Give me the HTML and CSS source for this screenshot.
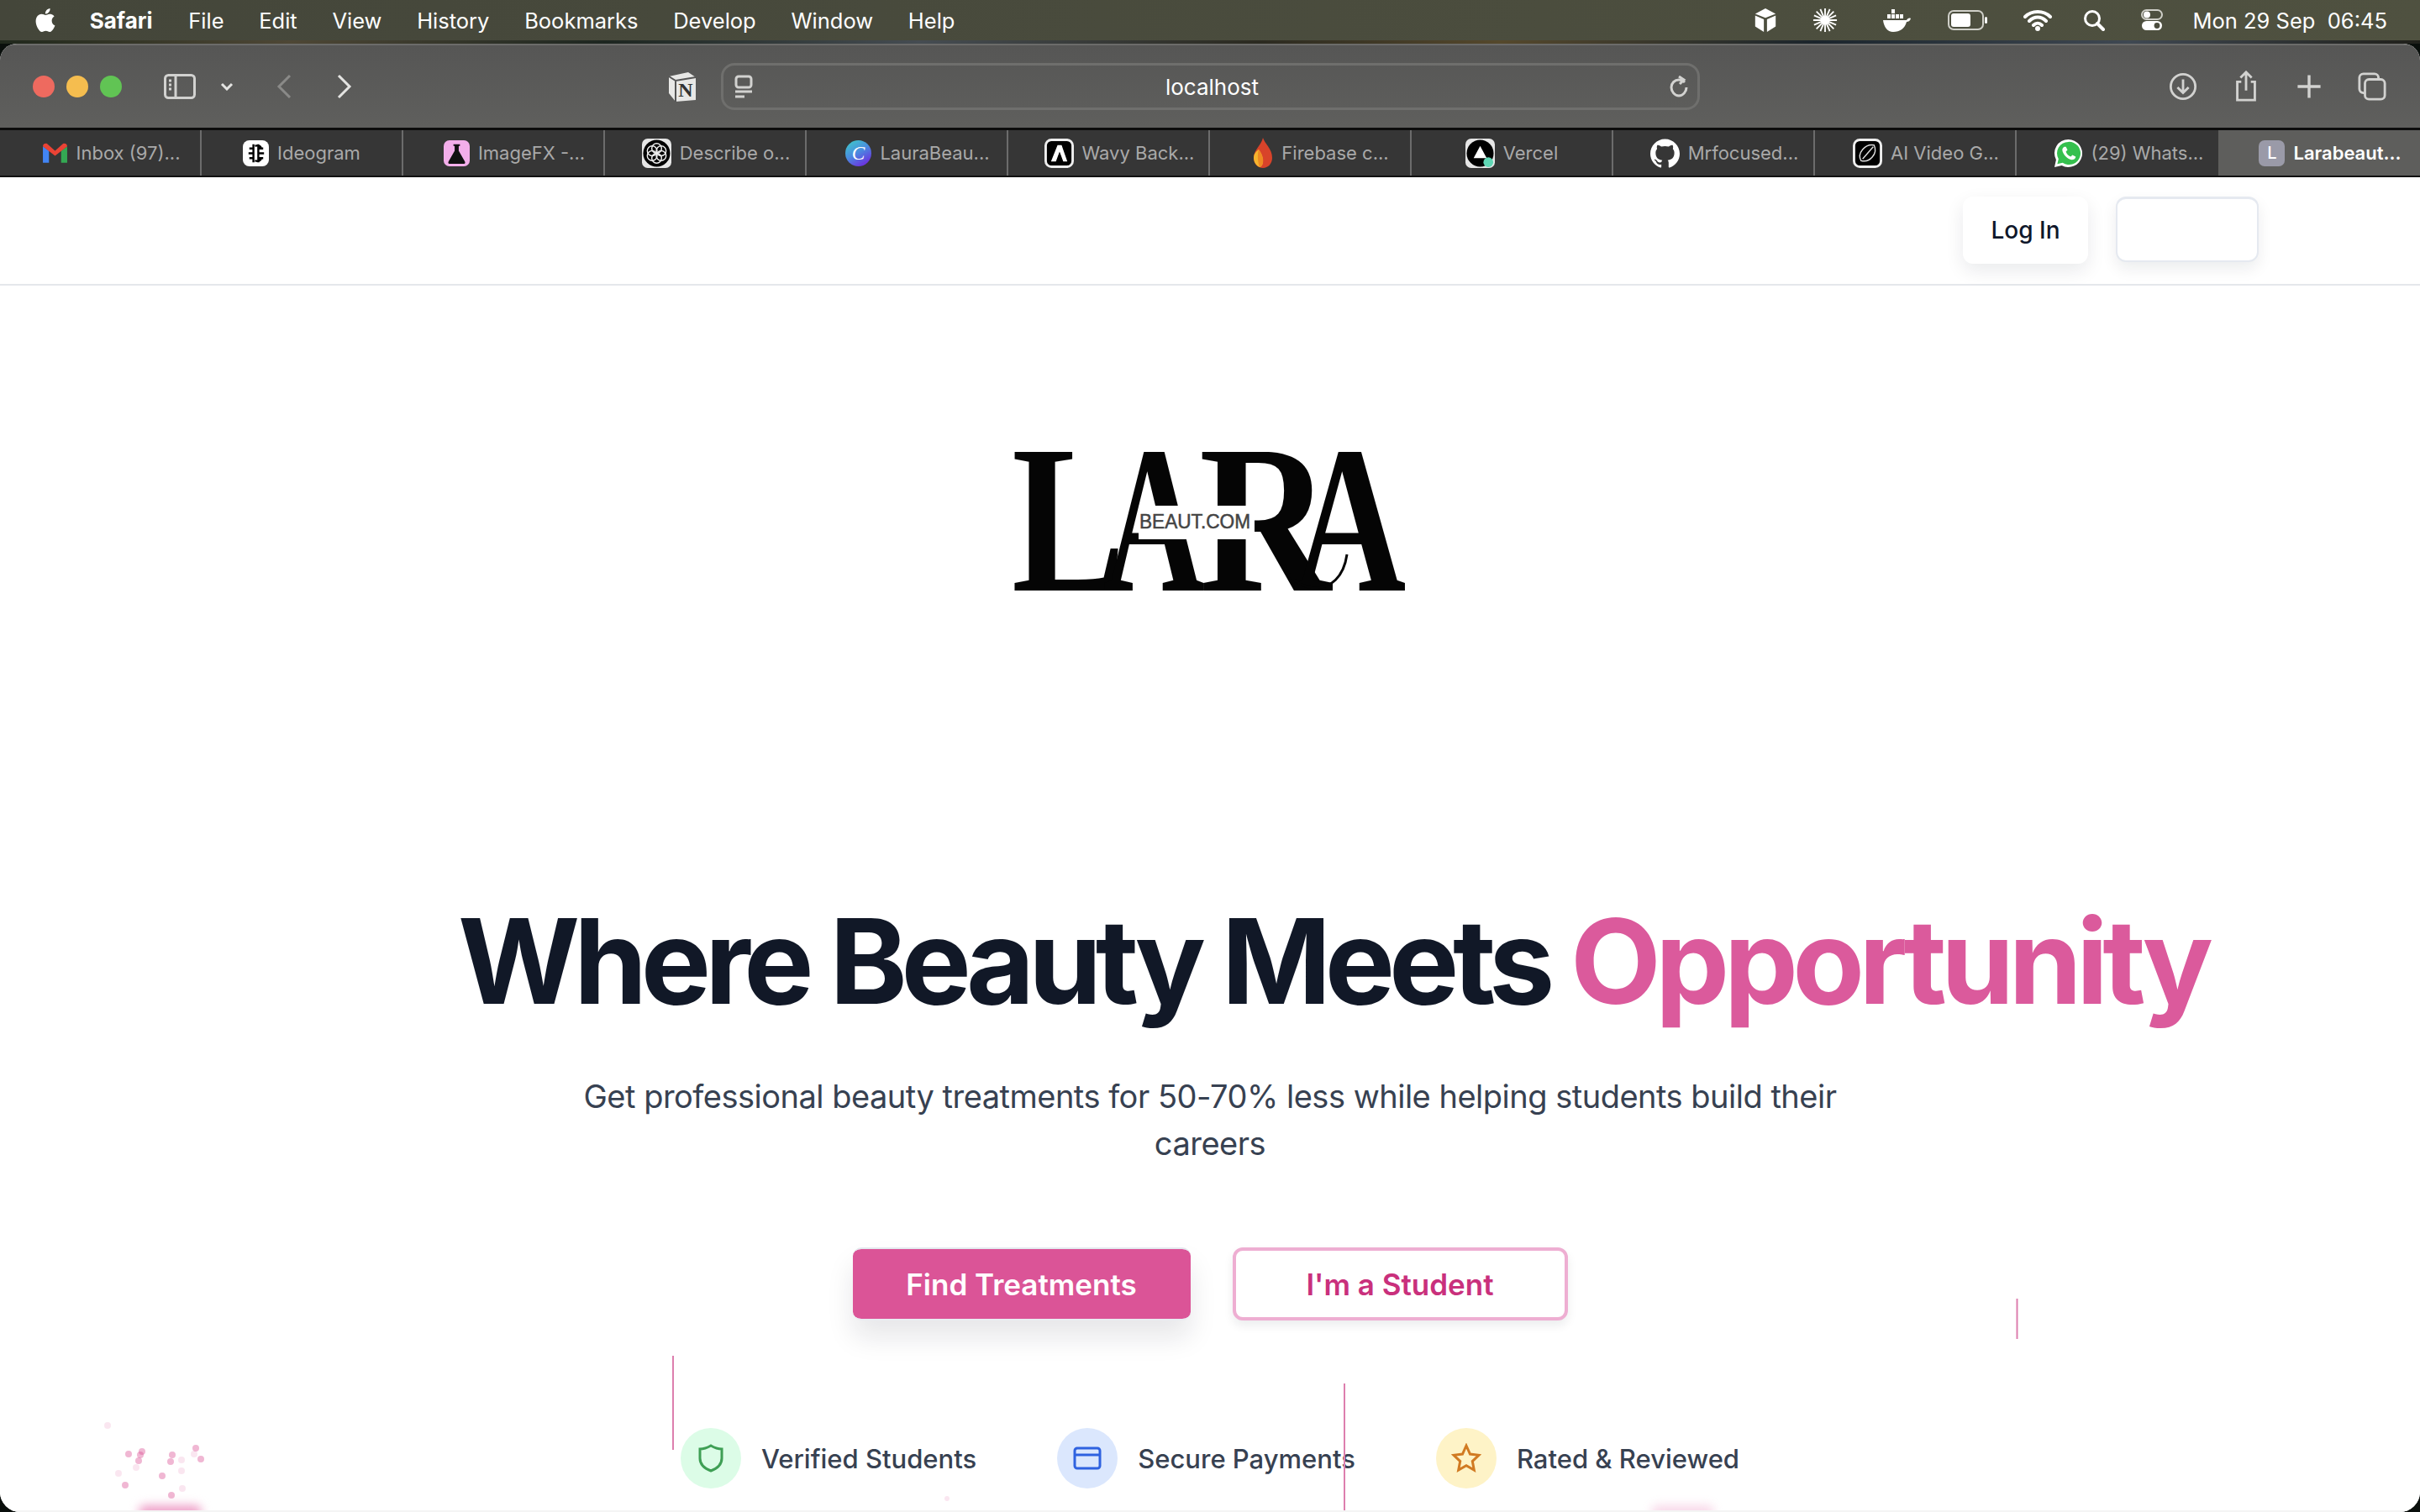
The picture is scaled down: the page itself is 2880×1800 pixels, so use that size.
FILE: index.html
```html
<!DOCTYPE html>
<html lang="en">
<head>
<meta charset="utf-8">
<title>Larabeaut</title>
<link rel="stylesheet" href="styles.css">
</head>
<body>
<div class="screen">
  <header class="menubar">
    <nav class="menu-left">
      <svg class="apple" viewBox="0 0 24 24"><path d="M12.152 6.896c-.948 0-2.415-1.078-3.96-1.04-2.04.027-3.91 1.183-4.961 3.014-2.117 3.675-.546 9.103 1.519 12.09 1.013 1.454 2.208 3.09 3.792 3.039 1.52-.065 2.09-.987 3.935-.987 1.831 0 2.35.987 3.96.948 1.637-.026 2.676-1.48 3.676-2.948 1.156-1.688 1.636-3.325 1.662-3.415-.039-.013-3.182-1.221-3.22-4.857-.026-3.04 2.48-4.494 2.597-4.559-1.429-2.09-3.623-2.324-4.39-2.376-2-.156-3.675 1.09-4.61 1.09zM15.53 3.83c.843-1.012 1.4-2.427 1.245-3.83-1.207.052-2.662.805-3.532 1.818-.78.896-1.454 2.338-1.273 3.714 1.338.104 2.715-.688 3.559-1.701"/></svg>
      <span class="menu-app">Safari</span>
      <span>File</span><span>Edit</span><span>View</span><span>History</span><span>Bookmarks</span><span>Develop</span><span>Window</span><span>Help</span>
    </nav>
    <div class="menu-right">
      <svg class="st st-box" viewBox="0 0 30 32"><path class="w" d="M15 1 28 8 15 13 2 8z"/><path class="w" d="M2 10 13 15V31L2 24z"/><path class="w" d="M28 10 17 15V31L28 24z"/></svg>
      <svg class="st st-star" viewBox="0 0 32 32"><g class="wl"><path d="M16 1V31M1 16H31M5 5 27 27M27 5 5 27M10 2 22 30M22 2 10 30M2 10 30 22M30 10 2 22"/></g></svg>
      <svg class="st st-whale" viewBox="0 0 36 30"><path class="w" d="M2 15H30C31 13 33 12 35 13 34 16 32 17 30 17 28 25 22 29 14 29 7 29 3 23 2 15z"/><path class="w" d="M7 8H11V13H7zM12 8H16V13H12zM17 8H21V13H17zM12 2H16V7H12zM22 8H26V13H22z"/></svg>
      <svg class="st st-batt" viewBox="0 0 48 24"><rect class="ol" x="1" y="1" width="41" height="22" rx="6"/><rect class="w" x="4" y="4" width="23" height="16" rx="3"/><rect class="w" x="44" y="8" width="3" height="8" rx="1.5"/></svg>
      <svg class="st st-wifi" viewBox="0 0 34 26"><path class="wa" d="M2 9C10 1 24 1 32 9M7 14C13 8 21 8 27 14M12 19C15 16 19 16 22 19"/><circle class="w" cx="17" cy="23" r="3"/></svg>
      <svg class="st st-search" viewBox="0 0 26 26"><circle class="ol2" cx="11" cy="11" r="8.5"/><path class="wa" d="M17 17 24 24"/></svg>
      <svg class="st st-ctrl" viewBox="0 0 28 28"><rect class="ol" x="2" y="2" width="24" height="11" rx="5.5"/><circle class="w" cx="8" cy="7.5" r="4"/><rect class="w" x="2" y="15" width="24" height="11" rx="5.5"/><circle class="dk" cx="20" cy="20.5" r="3.4"/></svg>
      <span class="clock">Mon 29 Sep&nbsp; 06:45</span>
    </div>
  </header>
  <div class="wallpaper"></div>
  <div class="window">
    <div class="toolbar">
      <div class="lights"><i class="red"></i><i class="amber"></i><i class="green"></i></div>
      <svg class="tb tb-side" viewBox="0 0 38 30"><rect class="tl" x="1.5" y="1.5" width="35" height="27" rx="4"/><path class="tl" d="M14 2V28"/><path class="tl" d="M6 8H9M6 13H9M6 18H9"/></svg>
      <svg class="tb tb-chev" viewBox="0 0 16 10"><path class="tl3" d="M2 2 8 8 14 2"/></svg>
      <svg class="tb tb-back" viewBox="0 0 18 30"><path class="tl dim" d="M16 2 3 15 16 28"/></svg>
      <svg class="tb tb-fwd" viewBox="0 0 18 30"><path class="tl3" d="M2 2 15 15 2 28"/></svg>
      <svg class="tb tb-notion" viewBox="0 0 38 38"><path class="nb" d="M3 7 26 2 35 8V35L11 37 3 27z"/><path class="nl" d="M3 7 11 12 35 8M11 12V37"/><text class="nt" x="23" y="31">N</text></svg>
      <div class="address">
        <svg class="tb tb-reader" viewBox="0 0 24 28"><rect class="tl" x="3" y="2" width="18" height="13" rx="3"/><path class="tl" d="M2 20H22M2 26H13"/></svg>
        <span class="url">localhost</span>
        <svg class="tb tb-reload" viewBox="0 0 24 26"><path class="tl" d="M19 8C17 6 15 5 12 5 7 5 3 9 3 14S7 24 12 24 21 19 21 14"/><path class="tl" d="M12 1 18 5 13 10"/></svg>
      </div>
      <div class="tb-right">
        <svg class="tb tb-r" viewBox="0 0 36 36"><circle class="tl" cx="18" cy="18" r="15.5"/><path class="tl" d="M18 9V26M11 19 18 26 25 19"/></svg>
        <svg class="tb tb-r" viewBox="0 0 30 40"><path class="tl" d="M9 14H4V37H26V14H21M15 25V2M8 9 15 2 22 9"/></svg>
        <svg class="tb tb-r" viewBox="0 0 30 30"><path class="tl" d="M15 3V27M3 15H27"/></svg>
        <svg class="tb tb-r" viewBox="0 0 36 36"><rect class="tl" x="2" y="2" width="24" height="24" rx="5"/><rect class="tl fillbg" x="9" y="9" width="25" height="25" rx="5"/></svg>
      </div>
    </div>
    <div class="tabs">
      <div class="tab ell">
        <svg class="fav" viewBox="0 0 30 24"><path fill="#4285f4" d="M1 23V4L8 9V23z"/><path fill="#34a853" d="M29 23V4L22 9V23z"/><path fill="#ea4335" d="M1 4C1 1 4 0 6 1L15 9 24 1C26 0 29 1 29 4L15 15z"/></svg>
        <span>Inbox (97)...</span>
      </div>
      <div class="tab">
        <svg class="fav" viewBox="0 0 32 32"><rect fill="#fff" width="32" height="32" rx="8"/><path class="brain" d="M13 5V27M19 5V27M8 10H14M7 16H13M8 22H14M18 10H25M19 16H26M18 22H25M15 7C20 5 23 8 22 11M15 25C20 27 23 24 22 21"/></svg>
        <span>Ideogram</span>
      </div>
      <div class="tab ell">
        <svg class="fav" viewBox="0 0 32 32"><rect fill="#f3aeea" width="32" height="32" rx="7"/><path fill="#111" d="M12 5H20V7H18.500V13L26 26C27 28 26 29 24 29H8C6 29 5 28 6 26L13.500 13V7H12z"/></svg>
        <span>ImageFX -...</span>
      </div>
      <div class="tab ell">
        <svg class="fav big" viewBox="0 0 36 36"><rect fill="#e6e6e6" width="36" height="36" rx="7"/><circle cx="18" cy="18" r="16.500" fill="#000"/><g class="gpt"><circle cx="18" cy="12" r="6"/><circle cx="23.500" cy="15" r="6"/><circle cx="23.500" cy="21" r="6"/><circle cx="18" cy="24" r="6"/><circle cx="12.500" cy="21" r="6"/><circle cx="12.500" cy="15" r="6"/></g></svg>
        <span>Describe o...</span>
      </div>
      <div class="tab ell">
        <svg class="fav" viewBox="0 0 32 32"><defs><linearGradient id="cv" x1="0" y1="0" x2="0.6" y2="1"><stop offset="0" stop-color="#3dd1c6"/><stop offset=".55" stop-color="#4a8be0"/><stop offset="1" stop-color="#6a35e0"/></linearGradient></defs><circle cx="16" cy="16" r="16" fill="url(#cv)"/><text class="cv" x="16" y="24">C</text></svg>
        <span>LauraBeau...</span>
      </div>
      <div class="tab ell">
        <svg class="fav big" viewBox="0 0 36 36"><rect fill="#000" stroke="#eee" stroke-width="3" x="1.500" y="1.500" width="33" height="33" rx="7"/><path fill="#fff" d="M8 28 16 8H21L28 28H23L18.500 16 14 28z"/></svg>
        <span>Wavy Back...</span>
      </div>
      <div class="tab ell">
        <svg class="fav flame" viewBox="0 0 24 36"><path fill="#d8432a" d="M12 0C14 7 23 13 23 24 23 31 18 36 12 36 6 36 1 31 1 24 1 14 10 9 12 0z"/><path fill="#f6b52e" d="M1 24C1 19 4 16 7 14 11 19 12 25 12 28 12 32 10 35 8 35 4 33 1 29 1 24z"/><path fill="#ee8a23" d="M7 14C11 19 13 25 12 30 11 33 10 34 8 35 6 30 5 20 7 14z"/></svg>
        <span>Firebase c...</span>
      </div>
      <div class="tab">
        <svg class="fav big" viewBox="0 0 36 36"><rect fill="#e6e6e6" width="36" height="36" rx="7"/><circle cx="18" cy="18" r="16.500" fill="#000"/><path fill="#fff" d="M18 9 26 24H10z"/><circle cx="28" cy="29" r="6" fill="#5fd6b4"/></svg>
        <span>Vercel</span>
      </div>
      <div class="tab ell">
        <svg class="fav big" viewBox="0 0 24 24"><path fill="#fff" d="M12 .297c-6.630 0-12 5.373-12 12 0 5.303 3.438 9.800 8.205 11.385.6.113.82-.258.82-.577 0-.285-.01-1.040-.015-2.040-3.338.724-4.042-1.610-4.042-1.610C4.422 18.070 3.633 17.700 3.633 17.700c-1.087-.744.084-.729.084-.729 1.205.084 1.838 1.236 1.838 1.236 1.070 1.835 2.809 1.305 3.495.998.108-.776.417-1.305.76-1.605-2.665-.3-5.466-1.332-5.466-5.930 0-1.310.465-2.380 1.235-3.220-.135-.303-.54-1.523.105-3.176 0 0 1.005-.322 3.300 1.230.96-.267 1.980-.399 3-.405 1.020.006 2.040.138 3 .405 2.280-1.552 3.285-1.230 3.285-1.230.645 1.653.24 2.873.12 3.176.765.84 1.230 1.910 1.230 3.220 0 4.610-2.805 5.625-5.475 5.920.42.36.81 1.096.81 2.220 0 1.606-.015 2.896-.015 3.286 0 .315.21.69.825.57C20.565 22.092 24 17.592 24 12.297c0-6.627-5.373-12-12-12"/></svg>
        <span>Mrfocused...</span>
      </div>
      <div class="tab ell">
        <svg class="fav big" viewBox="0 0 36 36"><rect fill="#000" stroke="#eee" stroke-width="3" x="1.500" y="1.500" width="33" height="33" rx="7"/><path class="swirl" d="M10 27C5 18 15 6 26 8 31 18 21 30 10 27zM12 25 25 10"/></svg>
        <span>AI Video G...</span>
      </div>
      <div class="tab ell">
        <svg class="fav big" viewBox="0 0 36 36"><path fill="#fff" d="M18 1A17 17 0 0 0 3 26L1 35 10 33A17 17 0 1 0 18 1z"/><path fill="#35c04e" d="M18 4A14 14 0 0 0 6 25L4.500 31 11 29.500A14 14 0 1 0 18 4z"/><path fill="#fff" d="M13 10C11 11 10 13 11 16 13 21 17 25 22 26 25 26 27 24 27 22L23 20 21 22C18 21 16 19 15 16L17 14 15 10z"/></svg>
        <span>(29) Whats...</span>
      </div>
      <div class="tab ell active">
        <span class="fav-l">L</span>
        <span>Larabeaut...</span>
      </div>
    </div>
    <main class="page">
      <div class="navbar">
        <button class="login">Log In</button>
        <button class="blank" aria-label="Sign up"></button>
      </div>
      <section class="hero">
        <svg class="logo" viewBox="0 0 466 167" role="img" aria-label="Lara Beaut.com">
          <text class="ll" transform="translate(-3 165) scale(.8 1)">L</text>
          <text class="ll" transform="translate(106 165) scale(.66 1)">A</text>
          <text class="ll" transform="translate(220 165) scale(.86 1)">R</text>
          <text class="ll" transform="translate(332 165) scale(.735 1)">A</text>
          <rect class="cut" x="148" y="64" width="138" height="40"/>
          <path class="swash" d="M322 135C332 168 388 178 396 122"/>
          <text class="lb" x="149" y="91" textLength="132" lengthAdjust="spacingAndGlyphs">BEAUT.COM</text>
        </svg>
        <h1 class="headline">Where Beauty Meets <em>Opportunity</em></h1>
        <p class="lead">Get professional beauty treatments for 50-70% less while helping students build their careers</p>
        <div class="cta">
          <button class="btn-primary">Find Treatments</button>
          <button class="btn-outline">I'm a Student</button>
        </div>
        <ul class="trust">
          <li>
            <span class="badge green-bg"><svg viewBox="0 0 36 36"><path class="i-green" d="M18 3C23 6 27 7 31 7V18C31 25 26 30 18 33 10 30 5 25 5 18V7C9 7 13 6 18 3z"/></svg></span>
            Verified Students
          </li>
          <li>
            <span class="badge blue-bg"><svg viewBox="0 0 36 36"><rect class="i-blue" x="3" y="6" width="30" height="24" rx="3"/><path class="i-blue" d="M3 14H33"/></svg></span>
            Secure Payments
          </li>
          <li>
            <span class="badge amber-bg"><svg viewBox="0 0 36 36"><path class="i-amber" d="M18 3 22.500 13 33 14.300 25.300 21.600 27.300 32 18 26.800 8.700 32 10.700 21.600 3 14.300 13.500 13z"/></svg></span>
            Rated &amp; Reviewed
          </li>
        </ul>
      </section>
      <svg class="deco" viewBox="0 211 2880 1589">
        <path class="vline" d="M801 1614V1726M1600 1647V1800M2400.500 1546V1594"/>
        <g class="p1"><circle cx="153" cy="1731" r="4"/><circle cx="169" cy="1728" r="4"/><circle cx="167" cy="1732" r="4"/><circle cx="165" cy="1739" r="4"/><circle cx="149" cy="1768" r="4"/><circle cx="193" cy="1757" r="4"/><circle cx="203" cy="1740" r="4"/><circle cx="205" cy="1732" r="4"/><circle cx="204" cy="1780" r="4"/><circle cx="233" cy="1724" r="4"/><circle cx="239" cy="1737" r="4"/></g>
        <g class="p2"><circle cx="128" cy="1697" r="4"/><circle cx="162" cy="1747" r="4"/><circle cx="141" cy="1754" r="4"/><circle cx="216" cy="1738" r="4"/><circle cx="216" cy="1751" r="4"/><circle cx="217" cy="1772" r="4"/><circle cx="231" cy="1731" r="4"/><circle cx="1127" cy="1784" r="3"/></g>
      </svg>
      <div class="glow glow-a"></div>
      <div class="glow glow-b"></div>
    </main>
  </div>
</div>
</body>
</html>
```

FILE: styles.css
```css
* { box-sizing: border-box; }
html, body { margin: 0; padding: 0; }
body { width: 2880px; height: 1800px; overflow: hidden; background: #0a0f0c; font-family: Inter, "Liberation Sans", sans-serif; }
.screen { width: 2880px; height: 1800px; display: flex; flex-direction: column; position: relative; }

.menubar { height: 48px; flex: none; display: flex; justify-content: space-between; align-items: center; background: linear-gradient(90deg, #44463a, #4f5140); color: #fff; font-size: 25.5px; padding: 0 39px 0 40px; }
.menu-left { display: flex; align-items: center; gap: 41.7px; }
.apple { width: 28px; height: 32px; fill: #fff; margin-right: -3px; }
.menu-app { font-weight: 700; font-size: 26px; margin-right: 1px; }
.menu-right { display: flex; align-items: center; }
.st { flex: none; height: 30px; }
.st-box { width: 30px; margin-right: 40px; }
.st-star { width: 32px; margin-right: 51px; }
.st-whale { width: 36px; margin-right: 43px; }
.st-batt { width: 48px; height: 24px; margin-right: 42px; }
.st-wifi { width: 34px; height: 26px; margin-right: 37px; }
.st-search { width: 26px; height: 26px; margin-right: 42px; }
.st-ctrl { width: 28px; height: 28px; margin-right: 34px; }
.w { fill: #fff; }
.wl path { fill: none; stroke: #fff; stroke-width: 2; }
.wa { fill: none; stroke: #fff; stroke-width: 4; stroke-linecap: round; }
.ol { fill: none; stroke: #cfcfc8; stroke-width: 2; }
.ol2 { fill: none; stroke: #fff; stroke-width: 3; }
.dk { fill: #4c4d3e; }
.clock { color: #fff; font-size: 25.5px; white-space: nowrap; }

.wallpaper { height: 4px; flex: none; background: linear-gradient(90deg, #20281c, #4e4735 12%, #1d2620 25%, #454c52 38%, #2b2a20 52%, #55482c 62%, #1b252c 75%, #3f4852 88%, #20201a); }
.window { flex: 1; min-height: 0; display: flex; flex-direction: column; border-radius: 20px 20px 24px 24px; overflow: hidden; background: #fff; }

.toolbar { height: 100px; flex: none; display: flex; align-items: center; padding-left: 39px; background: linear-gradient(180deg, #565655, #5f5f5d); border-top: 2px solid #6c6c6a; position: relative; }
.lights { display: flex; gap: 14px; margin-right: 50px; }
.lights i { display: block; width: 26px; height: 26px; border-radius: 50%; }
.red { background: #ee6a5f; }
.amber { background: #f5bd4f; }
.green { background: #61c454; }
.tb { flex: none; }
.tl { fill: none; stroke: #d2d2d0; stroke-width: 3; }
.tl3 { fill: none; stroke: #e4e4e2; stroke-width: 3; }
.dim { stroke: #8a8a88; }
.fillbg { fill: #5c5c5a; }
.tb-side { width: 38px; height: 30px; margin-right: 29px; }
.tb-chev { width: 16px; height: 10px; margin-right: 51px; }
.tb-back { width: 18px; height: 30px; margin-right: 54px; }
.tb-fwd { width: 18px; height: 30px; margin-right: 374px; }
.tb-notion { width: 38px; height: 38px; margin-right: 27px; }
.nb { fill: #e8e8e6; }
.nl { fill: none; stroke: #555; stroke-width: 2; }
.nt { font-family: "Liberation Serif", serif; font-size: 24px; font-weight: 700; fill: #333; text-anchor: middle; }
.address { width: 1165px; height: 56px; flex: none; border: 3px solid #6f6f6d; border-radius: 16px; display: flex; align-items: center; justify-content: space-between; padding: 0 10px 0 12px; }
.tb-reader { width: 24px; height: 28px; }
.tb-reload { width: 24px; height: 26px; }
.url { color: #fff; font-size: 26px; margin-left: 2px; }
.tb-right { position: absolute; right: 40px; top: 0; height: 100%; display: flex; align-items: center; gap: 41px; }
.tb-r { width: 34px; height: 38px; }

.tabs { height: 59px; flex: none; display: flex; background: #363636; border-top: 3px solid #0c0c0c; border-bottom: 2px solid #111; }
.tab { width: 240px; flex: none; display: flex; align-items: center; justify-content: center; gap: 10px; color: #a9a9a9; font-size: 22px; border-right: 2px solid #6c6c6c; white-space: nowrap; }
.tab.ell { padding-left: 26px; }
.tab:nth-child(11) { border-right: 0; }
.tab.active { background: #5e5e5c; color: #fff; font-weight: 600; border-right: 0; }
.fav { width: 31px; height: 31px; flex: none; }
.fav.big { width: 35px; height: 35px; }
.fav.flame { width: 24px; height: 36px; }
.brain { fill: none; stroke: #000; stroke-width: 2.500; }
.gpt circle { fill: none; stroke: #eee; stroke-width: 1.500; }
.cv { font-family: "Liberation Serif", serif; font-style: italic; font-size: 24px; fill: #fff; text-anchor: middle; }
.swirl { fill: none; stroke: #ddd; stroke-width: 1.500; }
.fav-l { width: 31px; height: 31px; flex: none; background: #9a9aa8; border-radius: 7px; font-size: 20px; font-weight: 500; display: flex; align-items: center; justify-content: center; color: #fff; }

.page { flex: 1; min-height: 0; position: relative; background: #fff; border-bottom: 2px solid #f4f4f4; overflow: hidden; }
.navbar { height: 129px; border-bottom: 2px solid #e5e7eb; display: flex; justify-content: flex-end; align-items: flex-start; gap: 33px; padding: 23px 192px 0 0; }
.login { width: 149px; height: 80px; border: 0; border-radius: 12px; background: #fff; color: #0f172a; font: 500 28px Inter, sans-serif; box-shadow: 0 8px 22px rgba(15,23,42,.09); }
.blank { width: 170px; height: 78px; border: 2px solid #e5e9f0; border-top-width: 3px; border-radius: 12px; background: #fff; box-shadow: 0 8px 18px rgba(15,23,42,.08); }

.hero { display: flex; flex-direction: column; align-items: center; padding-top: 198px; }
.logo { width: 466px; height: 167px; flex: none; overflow: hidden; }
.ll { font-family: "Liberation Serif", serif; font-weight: 700; font-size: 253px; fill: #050505; }
.cut { fill: #fff; }
.swash { fill: none; stroke: #050505; stroke-width: 3; }
.lb { font-family: "Liberation Sans", sans-serif; font-weight: 400; font-size: 23px; fill: #444; stroke: #444; stroke-width: .5; }

.headline { align-self: flex-start; margin: 360px 0 0 545px; height: 160px; font-size: 140px; line-height: 158px; font-weight: 700; letter-spacing: -7.3px; color: #111827; white-space: nowrap; }
.headline em { font-style: normal; color: #db5a9c; letter-spacing: -6.7px; }
.lead { width: 1536px; margin: 52px 0 0; text-align: center; font-size: 38px; letter-spacing: -.5px; line-height: 56px; color: #374151; }
.cta { display: flex; align-items: center; gap: 50px; margin-top: 96px; height: 87px; }
.btn-primary { width: 402px; height: 87px; border: 0; border-top: 2px solid #e4e9ef; border-bottom: 2px solid #e9edf2; border-radius: 10px; background: #db5497; background-clip: padding-box; color: #fff; font: 600 35px Inter, sans-serif; box-shadow: 0 20px 32px rgba(15,23,42,.1); }
.btn-outline { width: 399px; height: 87px; border: 4px solid #eeaed2; border-radius: 12px; background: #fff; color: #c9307c; font: 600 35px Inter, sans-serif; box-shadow: 0 6px 12px rgba(15,23,42,.08); }
.trust { list-style: none; display: flex; gap: 96px; margin: 128px 0 0; padding: 0; align-self: center; }
.trust li { display: flex; align-items: center; gap: 24px; font-size: 31px; font-weight: 500; color: #374151; white-space: nowrap; }
.badge { width: 72px; height: 72px; border-radius: 50%; display: flex; align-items: center; justify-content: center; }
.badge svg { width: 36px; height: 36px; }
.green-bg { background: #dcfce7; }
.blue-bg { background: #dbe7fd; }
.amber-bg { background: #fef3c7; }
.i-green { fill: none; stroke: #3f9f55; stroke-width: 3; }
.i-blue { fill: none; stroke: #2f62e0; stroke-width: 3; }
.i-amber { fill: none; stroke: #d17a22; stroke-width: 3; }

.deco { position: absolute; left: 0; top: 0; width: 2880px; height: 1589px; pointer-events: none; }
.vline { fill: none; stroke: #dd7fae; stroke-width: 2; }
.p1 circle { fill: #db5497; opacity: .42; }
.p2 circle { fill: #db5497; opacity: .15; }
.glow { position: absolute; bottom: -10px; height: 16px; border-radius: 8px; background: #eea0c8; filter: blur(6px); }
.glow-a { left: 165px; width: 75px; }
.glow-b { left: 1965px; width: 75px; opacity: .4; }
```
